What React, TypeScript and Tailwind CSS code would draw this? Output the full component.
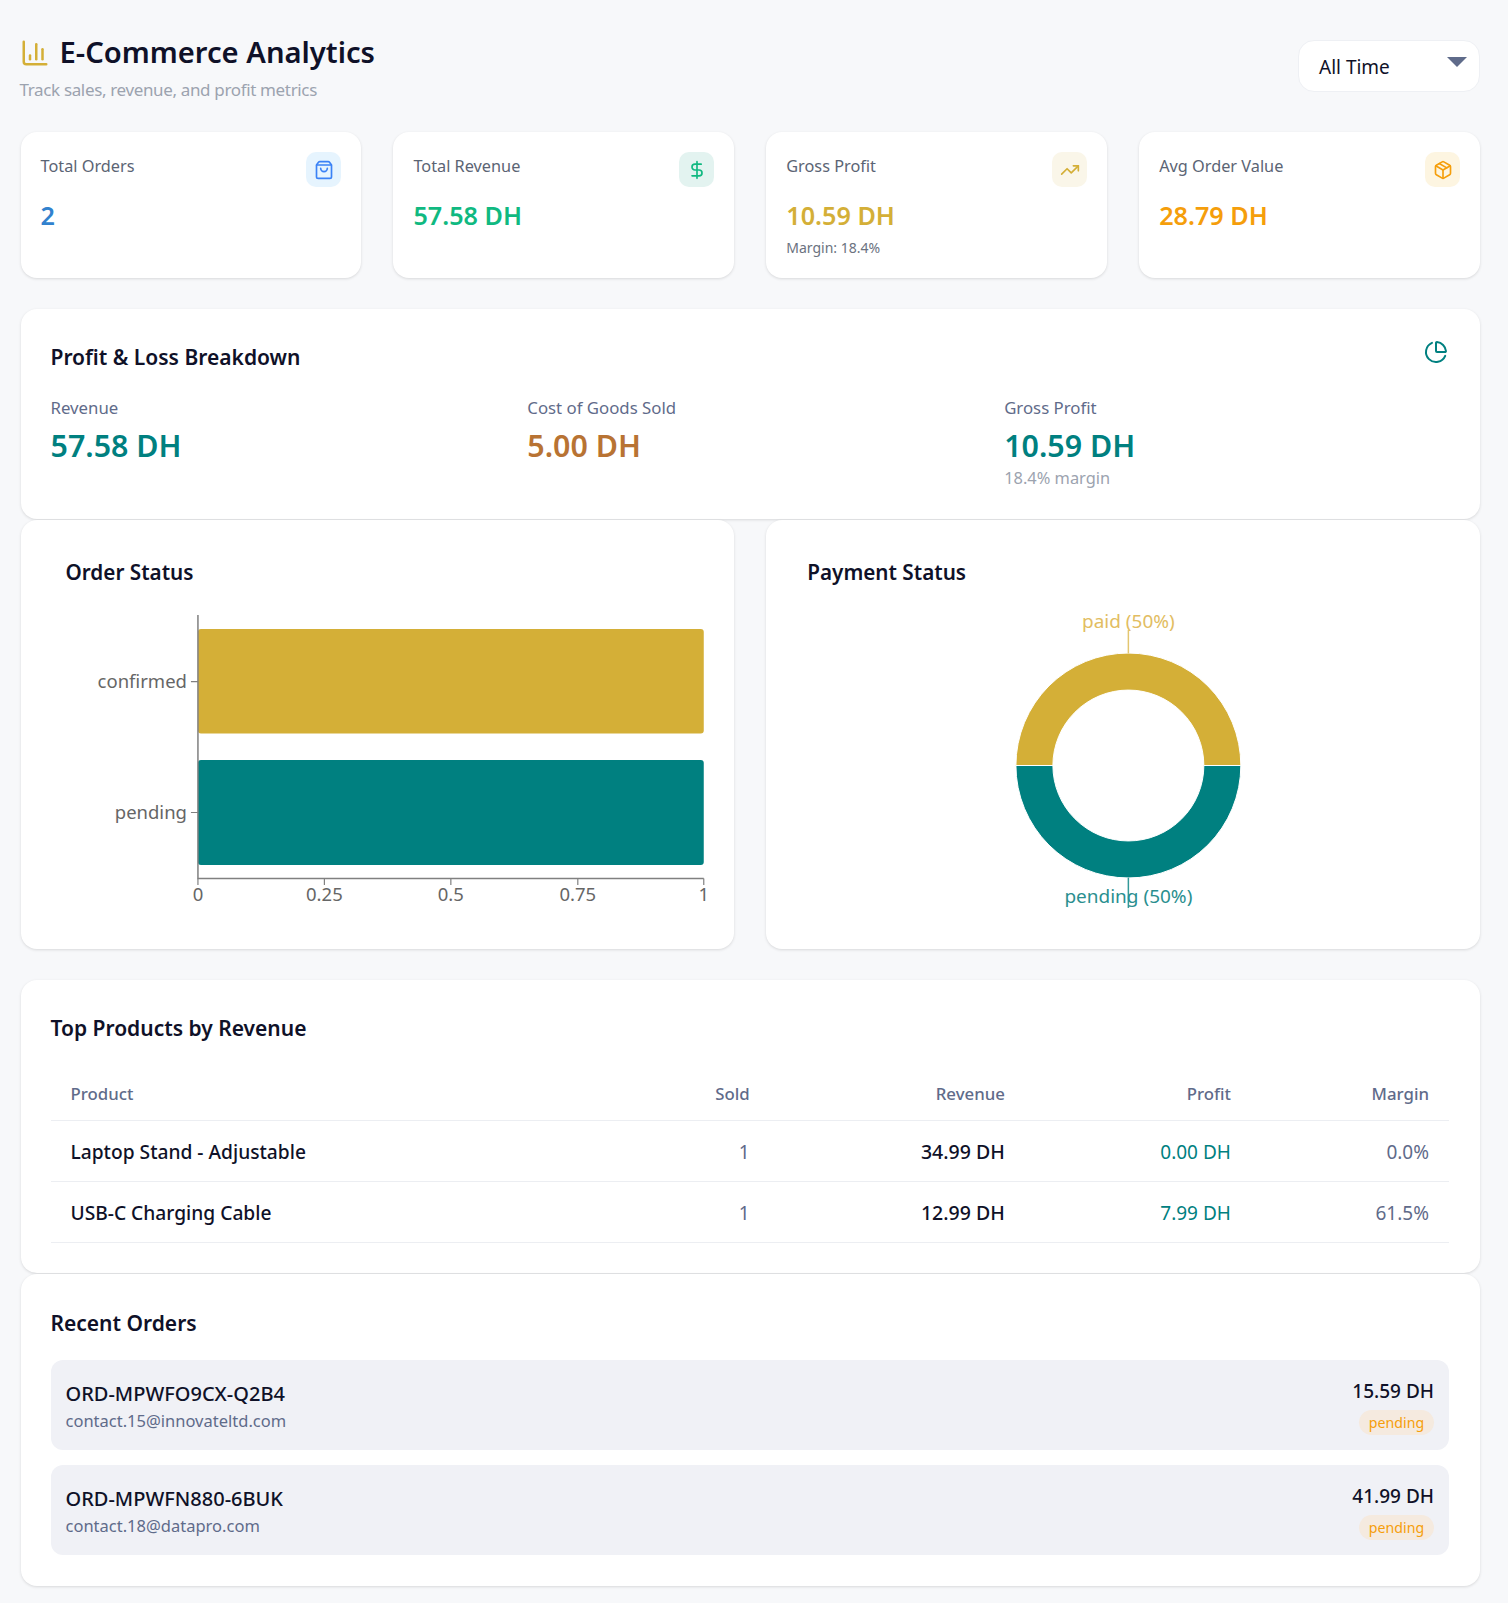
import { ChartColumn, ChartPie, DollarSign, Package, ShoppingBag, TrendingUp } from "lucide-react";

const statCards = [
    { label: "Total Orders", value: "2", valueClass: "text-[#3182ce]", tileClass: "bg-[#e6f4fe] text-[#3b82f6]", icon: ShoppingBag },
    { label: "Total Revenue", value: "57.58 DH", valueClass: "text-[#10b981]", tileClass: "bg-[#e3f3f0] text-[#10b981]", icon: DollarSign },
    { label: "Gross Profit", value: "10.59 DH", valueClass: "text-[#d4af37]", tileClass: "bg-[#faf6e9] text-[#d4af37]", icon: TrendingUp, note: "Margin: 18.4%" },
    { label: "Avg Order Value", value: "28.79 DH", valueClass: "text-[#f59e0b]", tileClass: "bg-[#fdf5e1] text-[#f59e0b]", icon: Package },
];

const products = [
    { name: "Laptop Stand - Adjustable", sold: 1, revenue: "34.99 DH", profit: "0.00 DH", margin: "0.0%" },
    { name: "USB-C Charging Cable", sold: 1, revenue: "12.99 DH", profit: "7.99 DH", margin: "61.5%" },
];

const orders = [
    { id: "ORD-MPWFO9CX-Q2B4", email: "contact.15@innovateltd.com", total: "15.59 DH" },
    { id: "ORD-MPWFN880-6BUK", email: "contact.18@datapro.com", total: "41.99 DH" },
];

const panel = "bg-white rounded-2xl shadow-[0_1px_3px_rgba(0,0,0,0.13)]";

function OrderStatusChart() {
    const ticks = [
        { x: 177, label: "0" },
        { x: 303.5, label: "0.25" },
        { x: 430, label: "0.5" },
        { x: 557, label: "0.75" },
        { x: 683, label: "1" },
    ];
    return (
        <svg viewBox="0 0 714 349" className="block w-full h-[349px] font-['Noto_Sans',sans-serif] text-[18.5px]">
            <rect x="177" y="29" width="506" height="104.5" rx="3" fill="#d4af37" />
            <rect x="177" y="160" width="506" height="105" rx="3" fill="#008080" />
            <path d="M177 15V278.5H683" fill="none" stroke="#808080" strokeWidth="1.5" />
            <path d="M170 81.5H177M170 212.5H177" stroke="#808080" strokeWidth="1.2" />
            {ticks.map((t) => (
                <g key={t.label}>
                    <path d={`M${t.x} 278.5V285`} stroke="#808080" strokeWidth="1.2" />
                    <text x={t.x} y="301.5" textAnchor="middle" fill="#666666">{t.label}</text>
                </g>
            ))}
            <text x="166" y="88" textAnchor="end" fill="#666666">confirmed</text>
            <text x="166" y="219" textAnchor="end" fill="#666666">pending</text>
        </svg>
    );
}

function PaymentStatusChart() {
    // centre of the donut, in the svg's own coordinates
    const cx = 362.5;
    const cy = 165.5;
    const outer = 112.5;
    const inner = 75.5;
    return (
        <svg viewBox="0 0 714 349" className="block w-full h-[349px] font-['Noto_Sans',sans-serif] text-[19px]">
            <path
                d={`M${cx - outer} ${cy}A${outer} ${outer} 0 0 1 ${cx + outer} ${cy}H${cx + inner}A${inner} ${inner} 0 0 0 ${cx - inner} ${cy}Z`}
                fill="#d4af37"
                stroke="#fff"
            />
            <path
                d={`M${cx + outer} ${cy}A${outer} ${outer} 0 0 1 ${cx - outer} ${cy}H${cx - inner}A${inner} ${inner} 0 0 0 ${cx + inner} ${cy}Z`}
                fill="#008080"
                stroke="#fff"
            />
            <path d={`M${cx} 53V30`} stroke="#e3c670" strokeWidth="1.5" />
            <path d={`M${cx} 278V308`} stroke="#339999" strokeWidth="1.5" />
            <text x={cx} y="28" textAnchor="middle" fill="#e2bd62">paid (50%)</text>
            <text x={cx} y="303" textAnchor="middle" fill="#2a8f8f">pending (50%)</text>
        </svg>
    );
}

export default function App() {
    return (
        <div className="min-h-screen bg-[#f7f8fa] pl-[20.5px] pr-[28px] pt-[30px] pb-[17px] w-[1508px] font-['Noto_Sans',sans-serif] text-[#0f1128]">
            {/* Header */}
            <div className="flex items-start justify-between h-[102px]">
                <div className="-ml-px">
                    <div className="flex items-center gap-2.5 h-[44px] pt-[2px]">
                        <ChartColumn size={30} className="text-[#d4af37]" />
                        <h1 className="text-[29.2px] font-semibold leading-none">E-Commerce Analytics</h1>
                    </div>
                    <p className="text-[17px] tracking-[-0.35px] text-[#9ca3af] mt-1 leading-6">Track sales, revenue, and profit metrics</p>
                </div>
                <div className="mt-[10px] w-[182px] h-[52px] bg-white rounded-2xl border border-[#eef0f4] flex justify-between pl-[20px] pr-[12px]">
                    <span className="text-[19px] leading-[52px]">All Time</span>
                    <svg width="20" height="10" viewBox="0 0 20 10" className="mt-[16px]">
                        <path d="M0 0H20L10 10Z" fill="#5f6b8a" />
                    </svg>
                </div>
            </div>

            {/* Stat cards */}
            <div className="grid grid-cols-4 gap-8">
                {statCards.map((card) => {
                    const Icon = card.icon;
                    return (
                        <div key={card.label} className={`${panel} h-[146px] px-5 pt-5`}>
                            <div className="flex justify-between items-start">
                                <p className="text-[16.3px] text-[#5b6474] leading-7">{card.label}</p>
                                <div className={`w-[35px] h-[35px] rounded-[10px] flex items-center justify-center ${card.tileClass}`}>
                                    <Icon size={20} />
                                </div>
                            </div>
                            <p className={`text-[25.2px] font-semibold leading-8 mt-[12px] ${card.valueClass}`}>{card.value}</p>
                            {card.note && <p className="text-[14px] text-[#6b7280] leading-5 mt-[7px]">{card.note}</p>}
                        </div>
                    );
                })}
            </div>

            {/* Profit and loss */}
            <div className={`${panel} h-[210px] mt-[31px] pl-[30px] pr-[31px] pt-[28px]`}>
                <div className="flex justify-between items-start h-[36px]">
                    <h2 className="text-[21px] font-semibold leading-8 mt-[4px]">Profit &amp; Loss Breakdown</h2>
                    <ChartPie size={24} className="text-[#008080] mt-[3px] mr-[1px]" />
                </div>
                <div className="grid grid-cols-3 gap-8 mt-[23px]">
                    <div>
                        <p className="text-[16.8px] text-[#5f6b8a] leading-6">Revenue</p>
                        <p className="text-[30.4px] font-semibold text-[#008080] leading-10 mt-[6px]">57.58 DH</p>
                    </div>
                    <div>
                        <p className="text-[16.8px] text-[#5f6b8a] leading-6">Cost of Goods Sold</p>
                        <p className="text-[30.4px] font-semibold text-[#b87333] leading-10 mt-[6px]">5.00 DH</p>
                    </div>
                    <div>
                        <p className="text-[16.8px] text-[#5f6b8a] leading-6">Gross Profit</p>
                        <p className="text-[30.4px] font-semibold text-[#008080] leading-10 mt-[6px]">10.59 DH</p>
                        <p className="text-[16.4px] text-[#9ca3af] leading-6">18.4% margin</p>
                    </div>
                </div>
            </div>

            {/* Charts */}
            <div className="grid grid-cols-2 gap-8 mt-px">
                <div className={`${panel} h-[429px]`}>
                    <h2 className="text-[20.7px] font-semibold leading-8 pl-[45px] pt-[36px] h-[80px]">Order Status</h2>
                    <OrderStatusChart />
                </div>
                <div className={`${panel} h-[429px]`}>
                    <h2 className="text-[20.7px] font-semibold leading-8 pl-[41px] pt-[36px] h-[80px]">Payment Status</h2>
                    <PaymentStatusChart />
                </div>
            </div>

            {/* Top products */}
            <div className={`${panel} h-[293px] mt-[31px] pl-[30px] pr-[31px] pt-[32px]`}>
                <h2 className="text-[21px] font-semibold leading-8">Top Products by Revenue</h2>
                <table className="w-full table-fixed mt-[24px] text-[19px]">
                    <colgroup>
                        <col className="w-[600px]" />
                        <col className="w-[119px]" />
                        <col className="w-[255px]" />
                        <col className="w-[226px]" />
                        <col className="w-[198px]" />
                    </colgroup>
                    <thead>
                        <tr className="border-b border-[#eceef2] h-[52px] text-[16.8px] text-[#5f6b8a]">
                            <th className="text-left font-medium px-5">Product</th>
                            <th className="text-right font-medium px-5">Sold</th>
                            <th className="text-right font-medium px-5">Revenue</th>
                            <th className="text-right font-medium px-5">Profit</th>
                            <th className="text-right font-medium px-5">Margin</th>
                        </tr>
                    </thead>
                    <tbody>
                        {products.map((p) => (
                            <tr key={p.name} className="border-b border-[#eceef2] h-[61px]">
                                <td className="px-5 pt-[3px] font-medium text-[19.2px]">{p.name}</td>
                                <td className="px-5 pt-[3px] text-right text-[#5f6b8a]">{p.sold}</td>
                                <td className="px-5 pt-[3px] text-right font-medium text-[19.5px]">{p.revenue}</td>
                                <td className="px-5 pt-[3px] text-right text-[#008080]">{p.profit}</td>
                                <td className="px-5 pt-[3px] text-right text-[#5f6b8a]">{p.margin}</td>
                            </tr>
                        ))}
                    </tbody>
                </table>
            </div>

            {/* Recent orders */}
            <div className={`${panel} h-[312px] mt-px pl-[30px] pr-[31px] pt-[33px]`}>
                <h2 className="text-[21px] font-semibold leading-8">Recent Orders</h2>
                <div className="flex flex-col gap-[15px] mt-[21px]">
                    {orders.map((order) => (
                        <div key={order.id} className="h-[90px] bg-[#f0f1f6] rounded-xl flex justify-between items-center px-[15px]">
                            <div>
                                <p className="text-[20px] font-medium leading-7 mt-[3px]">{order.id}</p>
                                <p className="text-[16.5px] text-[#5f6b8a] leading-6 mt-px">{order.email}</p>
                            </div>
                            <div className="flex flex-col items-end pt-px">
                                <p className="text-[19px] font-medium leading-7">{order.total}</p>
                                <span className="mt-[5px] h-[25px] w-[75px] rounded-full bg-[#f5eadf] text-[#f59e0b] text-[14.2px] leading-[25px] text-center">pending</span>
                            </div>
                        </div>
                    ))}
                </div>
            </div>
        </div>
    );
}
